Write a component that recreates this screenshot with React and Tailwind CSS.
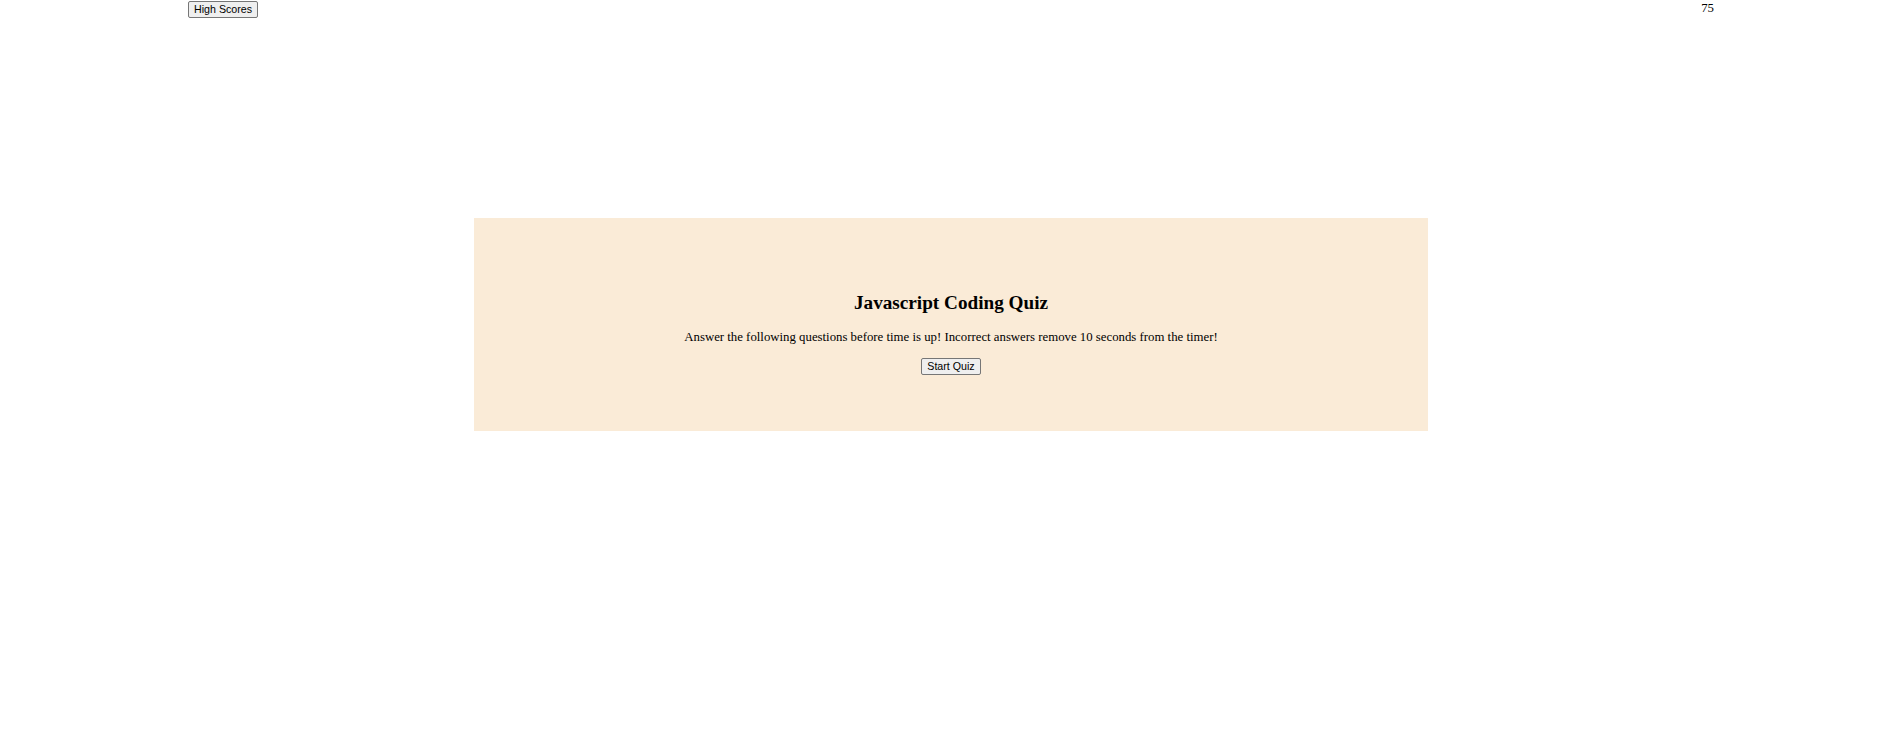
export default function App() {
  const btn =
    "font-['Liberation_Sans',Arial,sans-serif] text-[10.67px] leading-[13px] text-black bg-[#efefef] border border-[#767676] rounded-[2px] px-[5px] h-[17px] flex items-center";
  return (
    <div className="w-[1899px] h-[742px] bg-white font-['Liberation_Serif','Times_New_Roman',serif] text-black">
      <header className="flex justify-between items-start pl-[188px] pr-[185px] pt-px">
        <button className={btn}>High Scores</button>
        <span className="text-[12.8px] leading-[15px]">75</span>
      </header>
      <main className="pt-[200px]">
        <section className="ml-[474px] w-[954px] h-[213px] bg-[#faebd7] flex flex-col items-center pt-[74px]">
          <h2 className="font-bold text-[19.2px] leading-[22px]">Javascript Coding Quiz</h2>
          <p className="mt-[16px] text-[12.8px] leading-[15px]">
            Answer the following questions before time is up! Incorrect answers remove 10 seconds from the timer!
          </p>
          <button className={btn + " mt-[13px]"}>Start Quiz</button>
        </section>
      </main>
    </div>
  );
}
